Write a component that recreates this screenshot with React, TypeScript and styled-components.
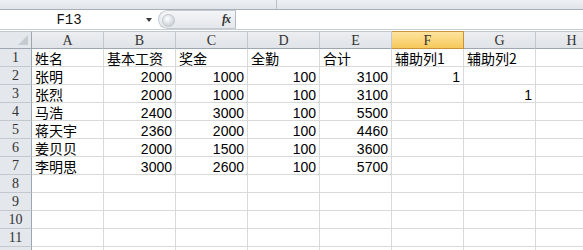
import React from "react";
import styled, { createGlobalStyle } from "styled-components";

const Global = createGlobalStyle`
  html, body { margin: 0; padding: 0; background: #fff; overflow: hidden; }
  body { width: 583px; height: 250px; }
`;

const Page = styled.div`
  width: 583px;
  height: 250px;
  overflow: hidden;
  display: flex;
  flex-direction: column;
  background: #fff;
  font-family: "Noto Sans CJK SC", "Liberation Sans", sans-serif;
`;

const RibbonEdge = styled.div`
  height: 9px;
  flex: none;
  background: linear-gradient(#eef0f3, #e1e4e8);
  border-bottom: 1px solid #a7afb9;
  display: grid;
  grid-template-columns: 277px 1fr;
`;

const RibbonPart = styled.div`
  border-right: 1px solid #b9c0c8;
`;

const FormulaBar = styled.div`
  height: 19px;
  flex: none;
  display: flex;
  align-items: stretch;
  background: #fff;
  border-bottom: 1px solid #c8cdd3;
`;

const NameBox = styled.div`
  width: 158px;
  flex: none;
  display: flex;
  align-items: center;
  position: relative;
  font-family: "Liberation Mono", monospace;
  font-size: 14px;
  color: #111;
`;

const NameText = styled.span`
  flex: 1;
  text-align: center;
  padding-right: 20px;
`;

const DropArrow = styled.span`
  position: absolute;
  right: 6px;
  top: 8px;
  width: 0;
  height: 0;
  border-left: 3.5px solid transparent;
  border-right: 3.5px solid transparent;
  border-top: 4px solid #3a3a3a;
`;

const FxArea = styled.div`
  width: 78px;
  flex: none;
  display: flex;
  align-items: center;
  justify-content: flex-end;
  padding-right: 5px;
  box-sizing: border-box;
  background: linear-gradient(#f4f5f7, #e4e7eb);
  border-radius: 10px 0 0 10px;
  border: 1px solid #c5cad1;
  border-right: 1px solid #b3bac3;
  position: relative;
`;

const Knob = styled.span`
  position: absolute;
  left: 3px;
  top: 3px;
  width: 11px;
  height: 11px;
  border-radius: 50%;
  background: radial-gradient(circle at 40% 35%, #ffffff, #cfd4da 70%);
  border: 1px solid #c2c7cd;
`;

const Fx = styled.span`
  font-family: "Liberation Serif", serif;
  font-style: italic;
  font-weight: bold;
  font-size: 12px;
  color: #333;
  letter-spacing: -1px;
`;

const FormulaInput = styled.div`
  flex: 1;
  background: #fff;
`;

const Gap = styled.div`
  height: 1px;
  flex: none;
  background: #fff;
`;

const Sheet = styled.div`
  display: grid;
  grid-template-columns: 32px repeat(8, 72px);
  grid-template-rows: 18px;
  grid-auto-rows: 18px;
`;

const Corner = styled.div`
  background: #e4e7eb;
  border-right: 1px solid #9ea7b1;
  border-bottom: 1px solid #9ea7b1;
  border-top: 1px solid #c3c8ce;
  box-sizing: border-box;
  position: relative;
  &::after {
    content: "";
    position: absolute;
    right: 3px;
    bottom: 3px;
    width: 0;
    height: 0;
    border-left: 10px solid transparent;
    border-bottom: 10px solid #c6cbd1;
  }
`;

const ColHead = styled.div<{ $active?: boolean }>`
  box-sizing: border-box;
  border-top: 1px solid ${(p) => (p.$active ? "#c9933a" : "#c3c8ce")};
  border-right: 1px solid ${(p) => (p.$active ? "#c9933a" : "#c3c8ce")};
  border-bottom: 1px solid ${(p) => (p.$active ? "#c9933a" : "#9ea7b1")};
  background: ${(p) =>
    p.$active ? "linear-gradient(#fde49e, #f7c95c)" : "linear-gradient(#eceef1, #e0e3e7)"};
  font-family: "Liberation Serif", serif;
  font-size: 14px;
  color: #333;
  display: flex;
  align-items: center;
  justify-content: center;
  line-height: 1;
  padding-top: 1px;
`;

const RowHead = styled.div`
  box-sizing: border-box;
  background: #e4e7eb;
  border-right: 1px solid #9ea7b1;
  border-bottom: 1px solid #c3c8ce;
  font-family: "Liberation Serif", serif;
  font-size: 14px;
  line-height: 1;
  color: #333;
  display: flex;
  align-items: center;
  justify-content: center;
  padding-top: 1px;
`;

const Cell = styled.div<{ $num?: boolean }>`
  box-sizing: border-box;
  border-right: 1px solid #d9d9d9;
  border-bottom: 1px solid #d9d9d9;
  font-family: ${(p) =>
    p.$num ? '"Liberation Sans", sans-serif' : '"Noto Sans CJK SC", "Liberation Sans", sans-serif'};
  font-size: 14px;
  color: #000;
  display: flex;
  align-items: center;
  justify-content: ${(p) => (p.$num ? "flex-end" : "flex-start")};
  padding: ${(p) => (p.$num ? "2px 3px 0 0" : "0 0 0 3px")};
  white-space: nowrap;
  overflow: hidden;
  line-height: 1;
`;

const cols = ["A", "B", "C", "D", "E", "F", "G", "H"];

type Val = string | number | null;
const rows: Val[][] = [
  ["姓名", "基本工资", "奖金", "全勤", "合计", "辅助列1", "辅助列2", null],
  ["张明", 2000, 1000, 100, 3100, 1, null, null],
  ["张烈", 2000, 1000, 100, 3100, null, 1, null],
  ["马浩", 2400, 3000, 100, 5500, null, null, null],
  ["蒋天宇", 2360, 2000, 100, 4460, null, null, null],
  ["姜贝贝", 2000, 1500, 100, 3600, null, null, null],
  ["李明思", 3000, 2600, 100, 5700, null, null, null],
  [null, null, null, null, null, null, null, null],
  [null, null, null, null, null, null, null, null],
  [null, null, null, null, null, null, null, null],
  [null, null, null, null, null, null, null, null],
  [null, null, null, null, null, null, null, null],
];

export default function App() {
  return (
    <>
      <Global />
      <Page>
        <RibbonEdge>
          <RibbonPart />
        </RibbonEdge>
        <FormulaBar>
          <NameBox>
            <NameText>F13</NameText>
            <DropArrow />
          </NameBox>
          <FxArea>
            <Knob />
            <Fx>fx</Fx>
          </FxArea>
          <FormulaInput />
        </FormulaBar>
        <Gap />
        <Sheet>
          <Corner />
          {cols.map((c) => (
            <ColHead key={c} $active={c === "F"}>
              {c}
            </ColHead>
          ))}
          {rows.map((r, i) => (
            <React.Fragment key={i}>
              <RowHead>{i + 1}</RowHead>
              {r.map((v, j) => (
                <Cell key={j} $num={typeof v === "number"}>
                  {v}
                </Cell>
              ))}
            </React.Fragment>
          ))}
        </Sheet>
      </Page>
    </>
  );
}
